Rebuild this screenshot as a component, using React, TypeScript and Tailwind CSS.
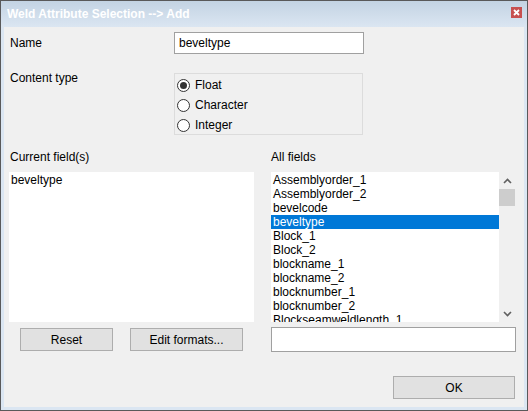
import React from "react";

const allFields = [
  "Assemblyorder_1",
  "Assemblyorder_2",
  "bevelcode",
  "beveltype",
  "Block_1",
  "Block_2",
  "blockname_1",
  "blockname_2",
  "blocknumber_1",
  "blocknumber_2",
  "Blockseamweldlength_1",
];

function Radio({ label, checked }: { label: string; checked?: boolean }) {
  return (
    <div className="flex h-[20px] items-center">
      <div className="ml-[2px] flex h-[13px] w-[13px] items-center justify-center rounded-full border border-[#333333] bg-white">
        {checked && <div className="h-[7px] w-[7px] rounded-full bg-[#333333]" />}
      </div>
      <span className="ml-[5px]">{label}</span>
    </div>
  );
}

function Button({ label, className }: { label: string; className: string }) {
  return (
    <div
      className={`flex h-[23px] items-center justify-center border border-[#adadad] bg-[#e1e1e1] text-black ${className}`}
    >
      {label}
    </div>
  );
}

export default function App() {
  return (
    <div
      className="flex h-[411px] w-[528px] flex-col border border-[#59595a] bg-[#dbe6f2] text-[12px] leading-[14px] text-black"
      style={{ fontFamily: '"Liberation Sans", Arial, sans-serif' }}
    >
      {/* title bar */}
      <div className="flex h-[26px] items-center bg-gradient-to-b from-[#c3d3e3] to-[#dbe6f2] pl-[6px] pr-[5px]">
        <span className="font-bold text-white">Weld Attribute Selection --&gt; Add</span>
        <div className="ml-auto mb-[3px] flex h-[11px] w-[11px] items-center justify-center bg-[#c75050]">
          <svg width="7" height="7" viewBox="0 0 7 7">
            <path d="M1 1 L6 6 M6 1 L1 6" stroke="white" strokeWidth="1.8" />
          </svg>
        </div>
      </div>

      {/* client area */}
      <div className="mx-[3px] mb-[3px] flex flex-1 flex-col bg-[#f0f0f0] pl-[5px]">
        <div className="mt-[5px] flex h-[22px] items-center">
          <span className="w-[165px] pl-[1px]">Name</span>
          <div className="flex h-[22px] w-[190px] items-center border border-[#a0a0a0] bg-white pl-[4px]">
            beveltype
          </div>
        </div>

        <div className="mt-[15px] flex items-start">
          <span className="w-[165px] pl-[1px] pt-[2px]">Content type</span>
          <div className="mt-[4px] h-[62px] w-[189px] border border-[#dcdcdc] pt-[1px]">
            <Radio label="Float" checked />
            <Radio label="Character" />
            <Radio label="Integer" />
          </div>
        </div>

        <div className="mt-[15px] flex">
          <span className="w-[262px] pl-[1px]">Current field(s)</span>
          <span>All fields</span>
        </div>

        <div className="mt-[8px] flex gap-[17px]">
          <div className="h-[150px] w-[245px] bg-white pl-[2px] pt-[1px]">
            <div className="flex h-[14px] items-center">beveltype</div>
          </div>
          <div className="flex h-[150px] w-[244px] bg-white">
            <div className="flex-1 overflow-hidden pt-[1px]">
              {allFields.map((f) => (
                <div
                  key={f}
                  className={`flex h-[14px] items-center whitespace-nowrap pl-[2px] ${
                    f === "beveltype" ? "bg-[#0078d7] text-white" : ""
                  }`}
                >
                  {f}
                </div>
              ))}
            </div>
            <div className="flex w-[16px] flex-col items-center bg-[#f0f0f0]">
              <div className="flex h-[17px] items-center justify-center">
                <svg width="9" height="6" viewBox="0 0 9 6">
                  <path d="M1 5 L4.5 1.5 L8 5" stroke="#606060" strokeWidth="1.6" fill="none" />
                </svg>
              </div>
              <div className="h-[17px] w-full bg-[#cdcdcd]" />
              <div className="mt-auto flex h-[17px] items-center justify-center">
                <svg width="9" height="6" viewBox="0 0 9 6">
                  <path d="M1 1 L4.5 4.5 L8 1" stroke="#606060" strokeWidth="1.6" fill="none" />
                </svg>
              </div>
            </div>
          </div>
        </div>

        <div className="mt-[5px] flex items-center">
          <Button label="Reset" className="ml-[11px] w-[93px]" />
          <Button label="Edit formats..." className="ml-[17px] w-[113px]" />
          <div className="ml-[28px] h-[25px] w-[245px] border border-[#a0a0a0] bg-white" />
        </div>

        <div className="mt-[24px] flex">
          <Button label="OK" className="ml-auto mr-[9px] w-[122px]" />
        </div>
      </div>
    </div>
  );
}
